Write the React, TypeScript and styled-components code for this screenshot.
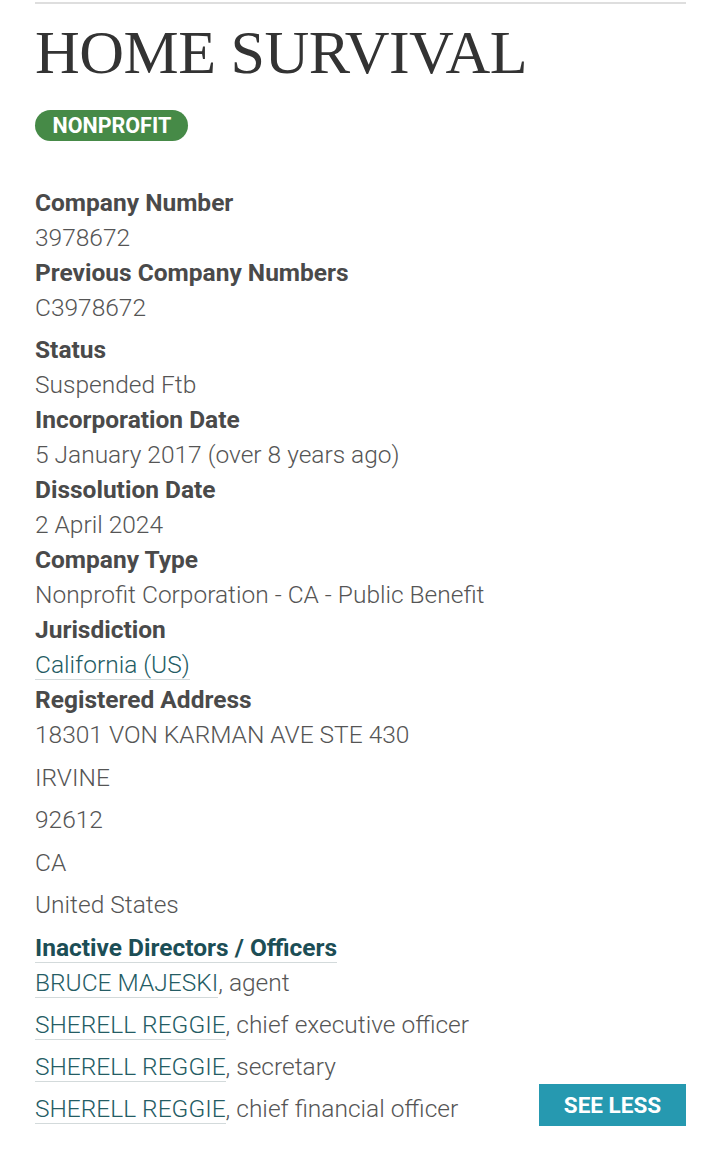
import styled, { createGlobalStyle } from 'styled-components';

const GlobalStyle = createGlobalStyle`
  body {
    margin: 0;
    background: #fff;
    font-family: Roboto, "Liberation Sans", sans-serif;
  }
`;

const Page = styled.div`
  padding: 0 34px 0 35px;
`;

const Sheet = styled.div`
  border-top: 2px solid #dedede;
  margin-top: 2px;
`;

const Title = styled.h1`
  margin: 17px 0 0;
  font-family: "Liberation Serif", serif;
  font-weight: 400;
  font-size: 62px;
  line-height: 62px;
  letter-spacing: -0.5px;
  color: #333;
`;

const Badge = styled.span`
  display: inline-block;
  margin-top: 27px;
  height: 31px;
  line-height: 31px;
  padding: 0 17px 0 17.5px;
  border-radius: 16px;
  background: #468a47;
  color: #fff;
  font-weight: 700;
  font-size: 21.5px;
`;

const Details = styled.dl`
  margin: 44px 0 0;
  font-size: 24.5px;
  line-height: 35px;
`;

const Label = styled.dt`
  font-weight: 700;
  color: #4a4a4a;
`;

const Value = styled.dd<{ $gap?: number }>`
  margin: 0 0 ${(p) => p.$gap ?? 0}px;
  font-weight: 300;
  color: #555;
`;

const AddressLine = styled.div`
  margin-bottom: 7.5px;
`;

const Link = styled.a<{ $strong?: boolean }>`
  color: ${(p) => (p.$strong ? '#1c4e56' : '#245c64')};
  font-weight: ${(p) => (p.$strong ? 700 : 300)};
  text-decoration: none;
  border-bottom: 1px solid #d3dadb;
`;

const Footer = styled.div`
  display: flex;
  justify-content: space-between;
  align-items: flex-end;
  margin-top: 2px;
`;

const Officers = styled.div`
  font-size: 24.5px;
  line-height: 35px;
`;

const Heading = styled.div``;

const Officer = styled.div`
  font-weight: 300;
  color: #555;
  margin-bottom: 7px;
  &:last-child {
    margin-bottom: 0;
  }
`;

const Button = styled.button`
  width: 147px;
  height: 42px;
  border: 0;
  background: #2699b0;
  color: #fff;
  font-family: Roboto, "Liberation Sans", sans-serif;
  font-weight: 700;
  font-size: 22.5px;
  cursor: pointer;
`;

const officers = [
  ['BRUCE MAJESKI', 'agent'],
  ['SHERELL REGGIE', 'chief executive officer'],
  ['SHERELL REGGIE', 'secretary'],
  ['SHERELL REGGIE', 'chief financial officer'],
];

export default function App() {
  return (
    <Page>
      <GlobalStyle />
      <Sheet>
        <Title>HOME SURVIVAL</Title>
        <Badge>NONPROFIT</Badge>
        <Details>
          <Label>Company Number</Label>
          <Value>3978672</Value>
          <Label>Previous Company Numbers</Label>
          <Value $gap={7}>C3978672</Value>
          <Label>Status</Label>
          <Value>Suspended Ftb</Value>
          <Label>Incorporation Date</Label>
          <Value>5 January 2017 (over 8 years ago)</Value>
          <Label>Dissolution Date</Label>
          <Value>2 April 2024</Value>
          <Label>Company Type</Label>
          <Value>Nonprofit Corporation - CA - Public Benefit</Value>
          <Label>Jurisdiction</Label>
          <Value>
            <Link href="#">California (US)</Link>
          </Value>
          <Label>Registered Address</Label>
          <Value>
            <AddressLine>18301 VON KARMAN AVE STE 430</AddressLine>
            <AddressLine>IRVINE</AddressLine>
            <AddressLine>92612</AddressLine>
            <AddressLine>CA</AddressLine>
            <AddressLine>United States</AddressLine>
          </Value>
        </Details>
        <Footer>
          <Officers>
            <Heading>
              <Link href="#" $strong>Inactive Directors / Officers</Link>
            </Heading>
            {officers.map(([name, role], i) => (
              <Officer key={i}>
                <Link href="#">{name}</Link>, {role}
              </Officer>
            ))}
          </Officers>
          <Button>SEE LESS</Button>
        </Footer>
      </Sheet>
    </Page>
  );
}
